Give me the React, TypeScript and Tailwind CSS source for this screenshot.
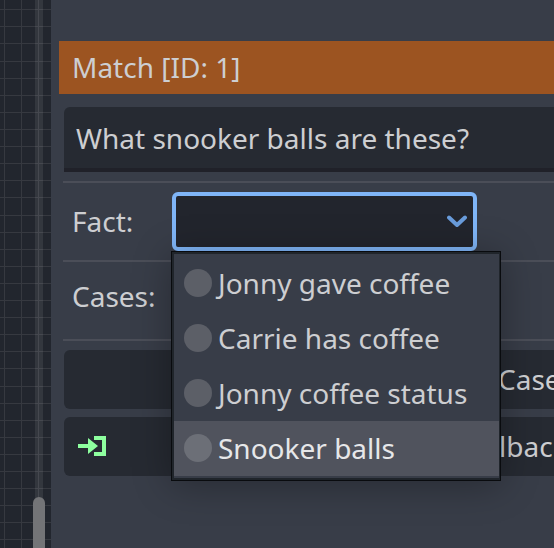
import React from "react";

const gridRows = [9, 26, 43, 61, 78, 95, 112, 129, 146, 163, 180, 197, 215, 232, 249, 266, 283, 300, 317, 334, 351, 368, 386, 403, 420, 437, 454, 471, 488, 505, 522, 539];
const gridColumns = [4, 21, 38];
const options = ["Jonny gave coffee", "Carrie has coffee", "Jonny coffee status", "Snooker balls"];

function GraphCanvas() {
  return (
    <div className="relative h-full w-[51px] shrink-0 bg-[#22262e]">
      <svg className="block" width="51" height="548" shapeRendering="crispEdges">
        {gridRows.map((y) => <rect key={y} x="0" y={y} width="51" height="1" fill="#363940" />)}
        {gridColumns.map((x) => <rect key={x} x={x} y="0" width="1" height="548" fill="#363940" />)}
      </svg>
      <div className="absolute inset-y-0 left-[35px] w-2 bg-white/8" />
      <div className="absolute top-[497px] left-[33px] h-20 w-3 rounded-full bg-[#737477]" />
    </div>
  );
}

function Separator() {
  return <div className="ml-1 h-[2px] shrink-0 bg-[#4b4e58]" />;
}

function Popup() {
  return (
    <div className="absolute top-[59px] -left-px h-[230px] w-[330px] border border-[#090b0e] bg-[#383d48] shadow-[0_4px_36px_rgba(0,0,0,0.3)]">
      <div className="flex h-full flex-col border-x-2 border-y-2 border-r border-[#20252b] pt-[2px]">
        {options.map((option, i) => (
          <div key={option} className={`flex h-[55px] shrink-0 items-center pl-[10px] ${i === 3 ? "bg-[#50535d] text-[#e6e7e9]" : ""}`}>
            <span className={`-mt-px mr-[6px] size-7 shrink-0 rounded-full ${i === 3 ? "bg-[#6c6f77]" : "bg-[#5c5f67]"}`} />
            <span className="-mt-[2px] whitespace-nowrap">{option}</span>
          </div>
        ))}
      </div>
    </div>
  );
}

export default function App() {
  return (
    <div className="flex h-[548px] w-[554px] overflow-hidden bg-[#383d48] font-['Noto_Sans',sans-serif] text-[28px] leading-[38px] text-[#cdced1]">
      <GraphCanvas />
      <main className="flex min-w-0 flex-1 flex-col pt-[41px] pl-2">
        <header className="flex h-[53px] shrink-0 items-center bg-[#9c5421] pb-[2px] pl-[13px]">Match [ID: 1]</header>
        <div className="mt-[13px] ml-[5px] flex h-[65px] shrink-0 items-center rounded-tl-md border-b-4 border-[#202129] bg-[#262a32] pl-3">What snooker balls are these?</div>
        <div className="h-[9px] shrink-0" />
        <Separator />
        <div className="flex h-[77px] shrink-0 items-center pl-[13px]">
          <span className="-mt-[2px] w-[100px]">Fact:</span>
          <div className="relative z-10 h-[59px] w-[305px]">
            <div className="flex h-full items-center justify-end rounded-md border-4 border-[#7fb5f7] bg-[#22252d] pr-[6px]">
              <svg className="-mt-px" width="20" height="13" viewBox="0 0 20 13" fill="none" stroke="#699cdb" strokeWidth="4" strokeLinecap="round" strokeLinejoin="round"><path d="M2 2.5L10 10L18 2.5" /></svg>
            </div>
            <Popup />
          </div>
        </div>
        <Separator />
        <div className="flex h-[77px] shrink-0 items-center pl-[13px]"><span className="-mt-[10px]">Cases:</span></div>
        <Separator />
        <div className="mt-[9px] ml-[5px] flex h-[59px] shrink-0 items-center rounded-l-md bg-[#262a32] pb-[2px] pl-[434px] whitespace-nowrap">Case</div>
        <div className="mt-2 ml-[5px] flex h-[59px] shrink-0 items-center rounded-l-md bg-[#262a32] pb-[2px] pl-[14px] whitespace-nowrap">
          <svg className="shrink-0" width="28" height="20" viewBox="0 0 28 20" fill="#8eff9f"><path d="M0 8H10V2L20 10L10 18V12H0Z" /><path d="M16 0H28V20H16V16H24V4H16Z" /></svg>
          <span className="ml-[393px]">lbac</span>
        </div>
      </main>
    </div>
  );
}
